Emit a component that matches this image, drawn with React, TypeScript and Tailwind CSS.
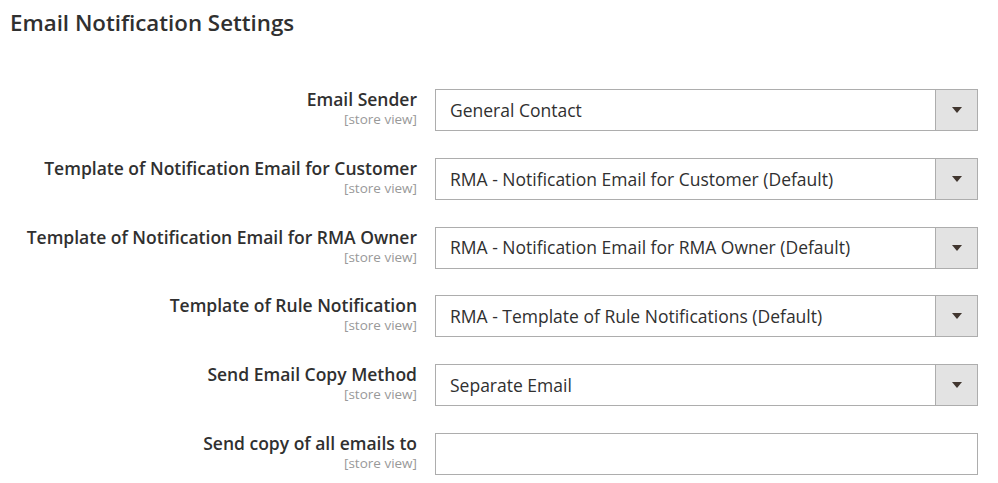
import React from 'react';

type Row = { label: string; value?: string; kind: 'select' | 'input' };

const rows: Row[] = [
  { label: 'Email Sender', value: 'General Contact', kind: 'select' },
  { label: 'Template of Notification Email for Customer', value: 'RMA - Notification Email for Customer (Default)', kind: 'select' },
  { label: 'Template of Notification Email for RMA Owner', value: 'RMA - Notification Email for RMA Owner (Default)', kind: 'select' },
  { label: 'Template of Rule Notification', value: 'RMA - Template of Rule Notifications (Default)', kind: 'select' },
  { label: 'Send Email Copy Method', value: 'Separate Email', kind: 'select' },
  { label: 'Send copy of all emails to', kind: 'input' },
];

const Field: React.FC<{ row: Row }> = ({ row }) => (
  <div className="flex items-start">
    <div className="w-[417px] shrink-0 pt-[1px] text-right">
      <div className="text-[17.5px] leading-[19px] font-semibold text-[#303030] whitespace-nowrap">{row.label}</div>
      <div className="mt-[2px] text-[13.5px] leading-[16px] text-[#999]">[store view]</div>
    </div>
    <div className="ml-[18px] w-[543px] h-[42px] flex border border-[#adadad] bg-white">
      {row.kind === 'select' ? (
        <>
          <div className="flex-1 flex items-center pl-[14px] text-[17.5px] text-[#303030] whitespace-nowrap">{row.value}</div>
          <div className="w-[42px] flex items-center justify-center bg-[#e3e3e3] border-l border-[#adadad]">
            <svg width="10" height="6" viewBox="0 0 10 6">
              <path d="M0 0 H10 L5 6 Z" fill="#41362f" />
            </svg>
          </div>
        </>
      ) : (
        <div className="flex-1" />
      )}
    </div>
  </div>
);

export default function App() {
  return (
    <div className="w-[998px] h-[483px] bg-white font-['Open_Sans',sans-serif] overflow-hidden">
      <h2 className="pl-[10px] pt-[9px] text-[22.3px] leading-[28px] font-semibold text-[#303030]">
        Email Notification Settings
      </h2>
      <div className="mt-[52px] flex flex-col gap-[26.8px]">
        {rows.map((r) => (
          <Field key={r.label} row={r} />
        ))}
      </div>
    </div>
  );
}
